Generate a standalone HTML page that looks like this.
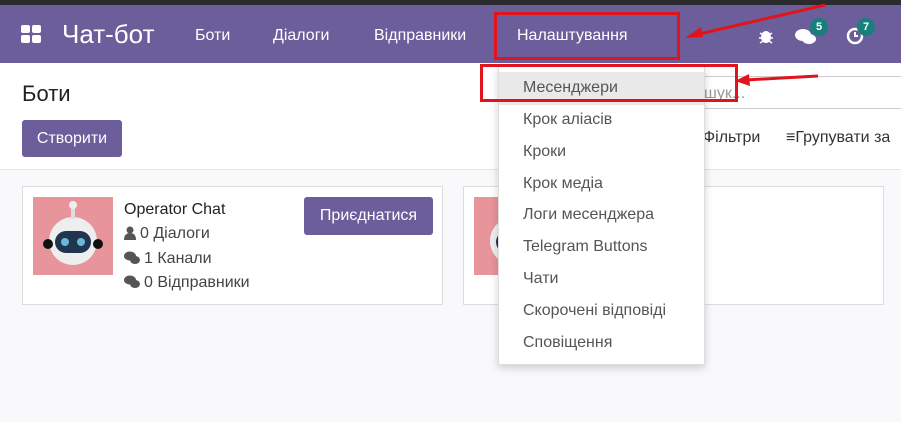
<!DOCTYPE html><html><head><meta charset="utf-8"><style>
*{margin:0;padding:0;box-sizing:border-box}
body{width:901px;height:422px;overflow:hidden;font-family:"Liberation Sans",sans-serif;background:#f9f9fb;position:relative;color:#333}
.top{position:absolute;left:0;top:0;width:901px;height:5px;background:#2b2a2e}
.nav{position:absolute;left:0;top:5px;width:901px;height:58px;background:#6b5e9b;color:#fff}
.nav span{position:absolute;top:22px;font-size:16px}
.cp{position:absolute;left:0;top:63px;width:901px;height:107px;background:#fff;border-bottom:1px solid #e4e4e4}
.abs{position:absolute}
.btn{position:absolute;background:#6b5e9b;color:#fff;border-radius:3px;font-size:16px;text-align:center}
.card{position:absolute;background:#fff;border:1px solid #ddd;height:119px;top:186px}
.dd{position:absolute;left:498px;top:66px;width:207px;height:299px;background:#fff;border:1px solid #ddd;box-shadow:0 3px 8px rgba(0,0,0,.18)}
.dd div{position:absolute;left:24px;font-size:16px;color:#555}
.red{position:absolute;border:3px solid #e0141a}
.badge{position:absolute;width:18px;height:18px;border-radius:9px;background:#17807c;color:#fff;font-size:11px;font-weight:bold;text-align:center;line-height:18px}
.info{position:absolute;font-size:16px;color:#444}
.info svg{vertical-align:-2px;margin-right:4px}
</style></head><body>
<div class="top"></div>
<div class="nav">
<svg class="abs" style="left:21px;top:20px" width="20" height="18"><rect x="0" y="0" width="9" height="8" rx="2" fill="#fff"/><rect x="11" y="0" width="9" height="8" rx="2" fill="#fff"/><rect x="0" y="10" width="9" height="8" rx="2" fill="#fff"/><rect x="11" y="10" width="9" height="8" rx="2" fill="#fff"/></svg>
<span style="left:62px;top:14px;font-size:26px">Чат-бот</span>
<span style="left:195px">Боти</span>
<span style="left:273px">Діалоги</span>
<span style="left:374px">Відправники</span>
<span style="left:517px">Налаштування</span>
<svg class="abs" style="left:759px;top:23px" width="14" height="16"><ellipse cx="7" cy="9" rx="5" ry="6" fill="#fff"/><path d="M1 5l3 2M13 5l-3 2M0 10h3M14 10h-3M1 15l3-2M13 15l-3-2" stroke="#fff" stroke-width="1.5"/></svg>
<svg class="abs" style="left:795px;top:23px" width="22" height="18"><ellipse cx="8" cy="7" rx="8" ry="6" fill="#fff"/><ellipse cx="14" cy="11" rx="7" ry="5" fill="#fff"/></svg>
<div class="badge" style="left:810px;top:13px">5</div>
<svg class="abs" style="left:846px;top:22px" width="18" height="18"><circle cx="9" cy="9" r="7" fill="none" stroke="#fff" stroke-width="2.5"/><path d="M9 5v4h3" stroke="#fff" stroke-width="2" fill="none"/></svg>
<div class="badge" style="left:857px;top:13px">7</div>
</div>
<div class="cp">
<div class="abs" style="left:22px;top:18px;font-size:22px;color:#222">Боти</div>
<div class="btn" style="left:22px;top:57px;width:100px;height:37px;line-height:37px">Створити</div>
<div class="abs" style="left:700px;top:13px;width:201px;height:33px;border-top:1px solid #ccc;border-bottom:1px solid #ccc"></div>
<div class="abs" style="left:704px;top:22px;color:#999;font-size:16px">шук...</div>
<div class="abs" style="left:703px;top:66px;font-size:16px;color:#333">Фільтри</div>
<div class="abs" style="left:786px;top:66px;font-size:16px;color:#333;white-space:nowrap">≡Групувати за</div>
</div>
<div class="card" style="left:22px;width:421px">
<svg class="abs" style="left:10px;top:10px" width="80" height="78"><rect width="80" height="78" fill="#e8949b"/><circle cx="40" cy="44" r="24" fill="#eee"/><rect x="22" y="34" width="36" height="22" rx="11" fill="#1f3550"/><circle cx="32" cy="45" r="4" fill="#6ab6d6"/><circle cx="48" cy="45" r="4" fill="#6ab6d6"/><rect x="38" y="8" width="4" height="14" fill="#ddd"/><circle cx="40" cy="8" r="4" fill="#eee"/><circle cx="15" cy="47" r="5" fill="#111"/><circle cx="65" cy="47" r="5" fill="#111"/></svg>
<div class="info" style="left:101px;top:14px;color:#222">Operator Chat</div>
<div class="info" style="left:101px;top:38px"><svg width="12" height="14"><circle cx="6" cy="4" r="3.5" fill="#555"/><path d="M0 14q0-7 6-7t6 7z" fill="#555"/></svg>0 Діалоги</div>
<div class="info" style="left:101px;top:63px"><svg width="16" height="14"><ellipse cx="6" cy="5" rx="6" ry="4.5" fill="#555"/><ellipse cx="11" cy="9" rx="5" ry="4" fill="#555"/></svg>1 Канали</div>
<div class="info" style="left:101px;top:87px"><svg width="16" height="14"><ellipse cx="6" cy="5" rx="6" ry="4.5" fill="#555"/><ellipse cx="11" cy="9" rx="5" ry="4" fill="#555"/></svg>0 Відправники</div>
<div class="btn" style="left:281px;top:10px;width:129px;height:38px;line-height:38px">Приєднатися</div>
</div>
<div class="card" style="left:463px;width:421px">
<svg class="abs" style="left:10px;top:10px" width="40" height="78"><rect width="40" height="78" fill="#e8949b"/><circle cx="40" cy="44" r="24" fill="#eee"/><rect x="22" y="34" width="36" height="22" rx="11" fill="#1f3550"/><circle cx="32" cy="45" r="4" fill="#6ab6d6"/></svg>
</div>
<div class="dd">
<div style="left:0;top:5px;width:205px;height:33px;background:#e9e9ea"></div>
<div style="top:12px">Месенджери</div>
<div style="top:44px">Крок аліасів</div>
<div style="top:76px">Кроки</div>
<div style="top:108px">Крок медіа</div>
<div style="top:139px">Логи месенджера</div>
<div style="top:171px">Telegram Buttons</div>
<div style="top:203px">Чати</div>
<div style="top:235px">Скорочені відповіді</div>
<div style="top:267px">Сповіщення</div>
</div>
<div class="red" style="left:494px;top:12px;width:186px;height:48px"></div>
<div class="red" style="left:480px;top:64px;width:258px;height:38px"></div>
<svg class="abs" style="left:680px;top:0" width="221" height="100"><path d="M145 5L15 35" stroke="#e0141a" stroke-width="3"/><path d="M5 38l16-11 2 10z" fill="#e0141a"/><path d="M138 76L65 80" stroke="#e0141a" stroke-width="3"/><path d="M55 81l14-7 1 12z" fill="#e0141a"/></svg>
</body></html>
